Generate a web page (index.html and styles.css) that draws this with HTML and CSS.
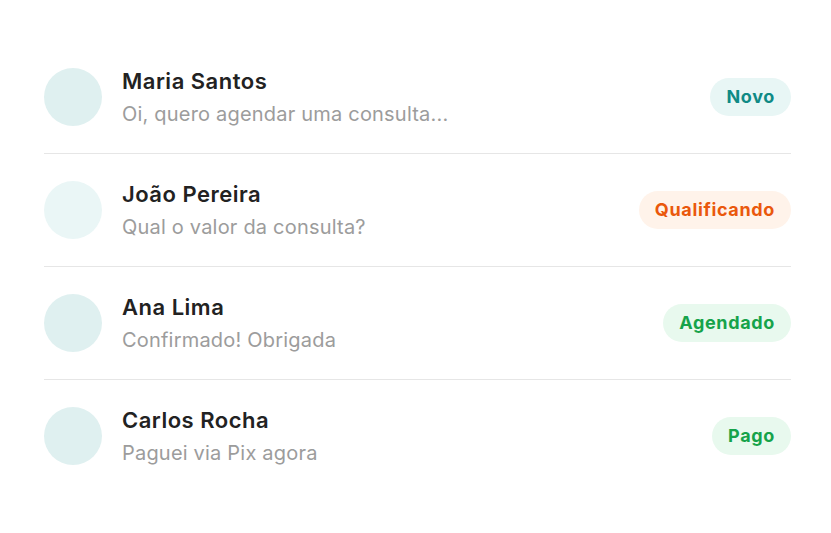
FILE: index.html
```html
<!DOCTYPE html>
<html lang="pt-BR">
<head>
  <meta charset="UTF-8" />
  <meta name="viewport" content="width=device-width, initial-scale=1.0" />
  <title>Conversas</title>
  <link rel="stylesheet" href="styles.css">
</head>
<body>
  <ul class="chats">
    <li class="chat">
      <div class="avatar"></div>
      <div class="info">
        <div class="name">Maria Santos</div>
        <div class="msg">Oi, quero agendar uma consulta...</div>
      </div>
      <span class="tag tag-new">Novo</span>
    </li>
    <li class="chat">
      <div class="avatar light"></div>
      <div class="info">
        <div class="name">João Pereira</div>
        <div class="msg">Qual o valor da consulta?</div>
      </div>
      <span class="tag tag-qual">Qualificando</span>
    </li>
    <li class="chat">
      <div class="avatar"></div>
      <div class="info">
        <div class="name">Ana Lima</div>
        <div class="msg">Confirmado! Obrigada</div>
      </div>
      <span class="tag tag-ok">Agendado</span>
    </li>
    <li class="chat">
      <div class="avatar"></div>
      <div class="info">
        <div class="name">Carlos Rocha</div>
        <div class="msg">Paguei via Pix agora</div>
      </div>
      <span class="tag tag-ok">Pago</span>
    </li>
  </ul>
</body>
</html>
```

FILE: styles.css
```css
* {
  box-sizing: border-box;
}

body {
  margin: 0;
  background: #fff;
  font-family: Inter, 'Noto Sans', sans-serif;
  color: #222;
}

.chats {
  list-style: none;
  margin: 0;
  padding: 41px 40px 0 44px;
}

.chat {
  display: flex;
  align-items: center;
  gap: 20px;
  padding: 27px 0;
  border-bottom: 1px solid #e6e6e6;
}

.chat:last-child {
  border-bottom: none;
}

.avatar {
  width: 58px;
  height: 58px;
  border-radius: 50%;
  background: #dff0f0;
  flex-shrink: 0;
}

.avatar.light {
  background: #eaf6f6;
}

.info {
  flex: 1;
  display: flex;
  flex-direction: column;
  gap: 8px;
}

.name {
  font-size: 22px;
  line-height: 26px;
  font-weight: 600;
  letter-spacing: 0.5px;
  color: #222;
}

.msg {
  font-size: 20px;
  line-height: 24px;
  letter-spacing: 0.2px;
  color: #9c9c9c;
}

.tag {
  padding: 8px 16px;
  border-radius: 19px;
  font-size: 18px;
  font-weight: 700;
  letter-spacing: 0.65px;
  line-height: 22px;
}

.tag-new {
  background: #e8f6f5;
  color: #0f8a85;
}

.tag-qual {
  background: #fff3ea;
  color: #ea580c;
}

.tag-ok {
  background: #e8f9ee;
  color: #16a34a;
}
```
